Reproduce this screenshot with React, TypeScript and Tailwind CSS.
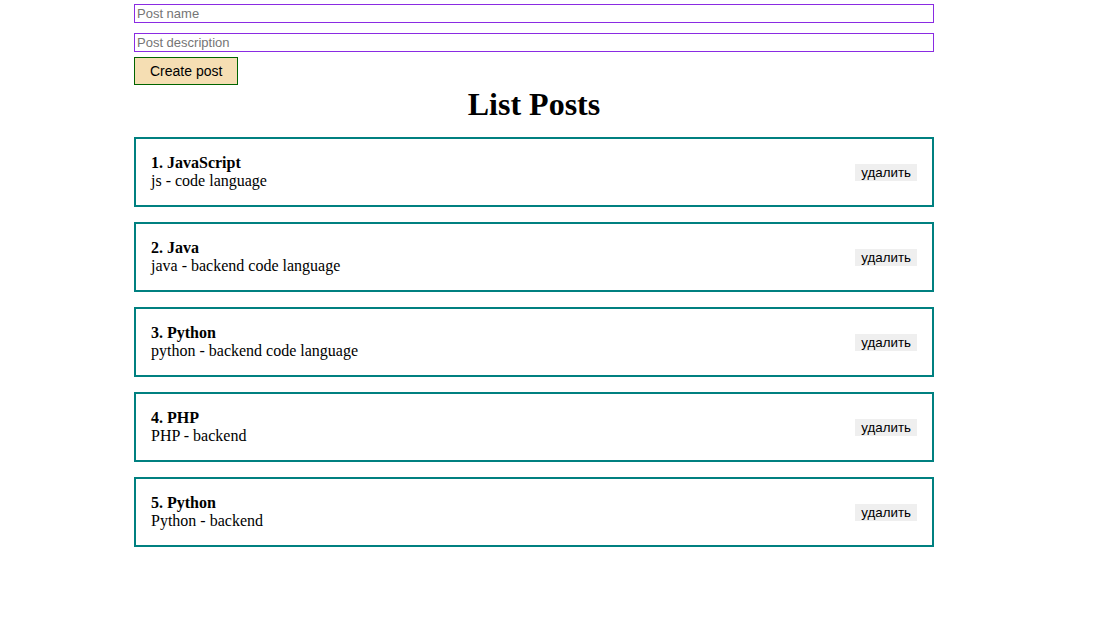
const posts = [
  { id: 1, title: "JavaScript", body: "js - code language" },
  { id: 2, title: "Java", body: "java - backend code language" },
  { id: 3, title: "Python", body: "python - backend code language" },
  { id: 4, title: "PHP", body: "PHP - backend" },
  { id: 5, title: "Python", body: "Python - backend" },
];

function PostItem({ post, number }: { post: (typeof posts)[number]; number: number }) {
  return (
    <div className="flex items-center justify-between border-2 border-[#008080] p-[15px]">
      <div className="font-['Liberation_Serif',serif] text-[16px] leading-[18px] text-black">
        <strong>
          {number}. {post.title}
        </strong>
        <div>{post.body}</div>
      </div>
      <button className="bg-[#efefef] px-[6px] py-px font-['Liberation_Sans',Arial,sans-serif] text-[13.333px] leading-[15px] text-black">
        удалить
      </button>
    </div>
  );
}

export default function App() {
  return (
    <div className="min-h-[620px] bg-white">
      <div className="ml-[134px] w-[800px] pt-[4px]">
        <form className="flex flex-col items-start font-['Liberation_Sans',Arial,sans-serif]">
          <input
            className="h-[19px] w-full border border-[#8a2be2] px-[2px] text-[13px] outline-none placeholder:text-[#757575]"
            placeholder="Post name"
          />
          <input
            className="mt-[10px] h-[19px] w-full border border-[#8a2be2] px-[2px] text-[13px] outline-none placeholder:text-[#757575]"
            placeholder="Post description"
          />
          <button
            type="button"
            className="mt-[5px] h-[28px] border border-[#006400] bg-[#f5deb3] px-[15px] text-[14px] text-black"
          >
            Create post
          </button>
        </form>
        <h1 className="mt-px text-center font-['Liberation_Serif',serif] text-[32px] leading-[37px] font-bold text-black">
          List Posts
        </h1>
        <div className="mt-[14px] flex flex-col gap-[15px]">
          {posts.map((post, i) => (
            <PostItem key={post.id} post={post} number={i + 1} />
          ))}
        </div>
      </div>
    </div>
  );
}
